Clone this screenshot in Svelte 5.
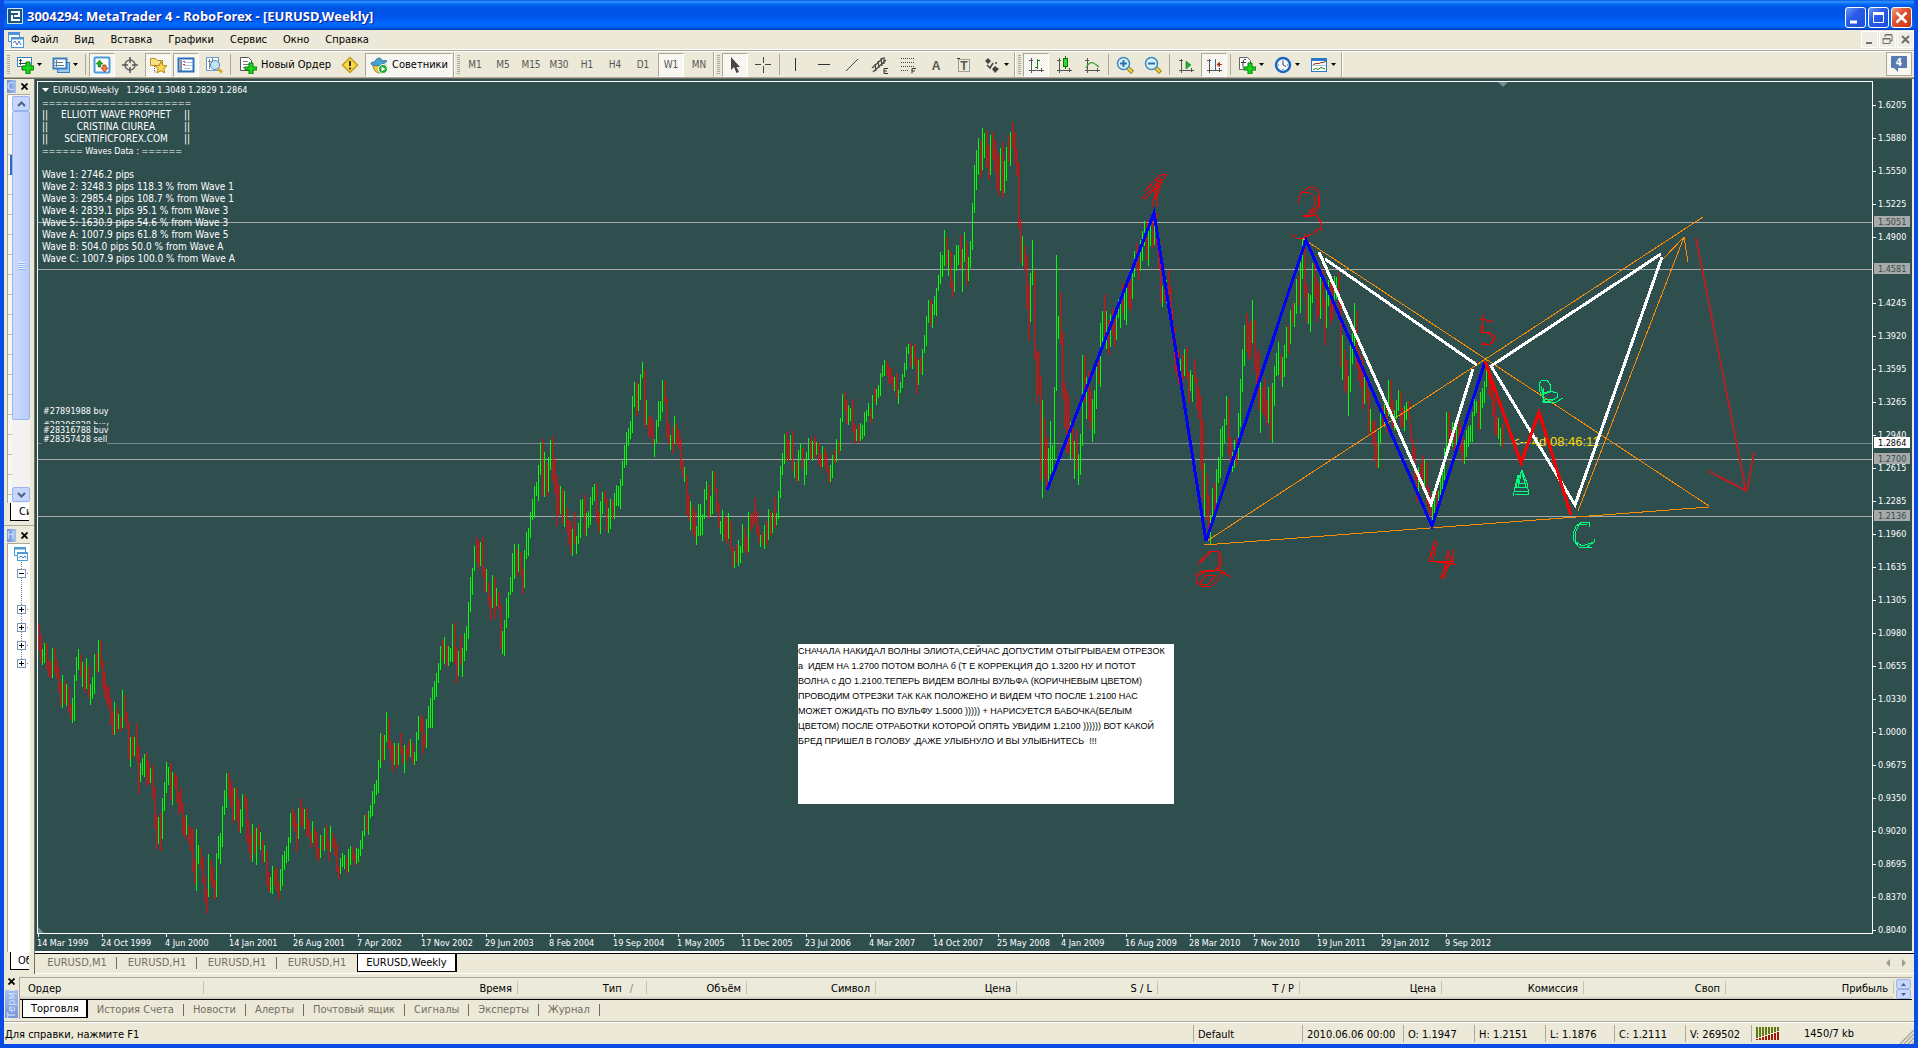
<script lang="ts">
	interface Segment {
		x: number;
		bars: string;
	}

	// Weekly bars, 2px apart. r = down, g = up, then high-low on the plot's y axis
	const segments: Segment[] = [
		{
			x: 38,
			bars: `r624-651 r635-662 g649-665 g643-663 r643-670 r660-677 r662-678 g648-678 r648-673 r660-679
			r667-693 r683-706 g675-708 r681-704 g684-706 r687-713 r704-719 g698-723 g675-721 g657-681
			g649-670 r655-677 g662-687 r663-693 g658-689 r667-698 g684-705 g677-699 g654-694 r653-673
			g640-672 r641-668 r661-690 r672-699 r685-705 r687-709 r698-725 r711-735 g702-735 r707-732
			g714-729 r717-732 g690-728 r695-722 r712-729 r722-760 g737-767 r736-758 g737-756 r723-761
			r746-794 g763-782 g758-775 g754-777 r753-786 r761-784 g768-783 r765-799 r787-829 r815-850
			g817-844 r813-851 g798-839 g782-811 g762-793 g767-785 r763-800 g772-805 r773-788 r776-803
			r792-815 r788-812 r803-835 r817-839 g815-835 r825-844 r828-851 r829-872 r860-883 g829-891
			g845-864 r847-869 r857-883 r876-903 r889-913 g854-897 r860-884 r867-888 r880-899 g853-897
			g836-859 g833-864 g806-847 g790-815 g773-808 r773-798 r780-806 r787-823 g788-820 r788-821
			r799-832 g809-833 g794-827 r795-809 r798-843 r820-852 r834-860 g824-862 r828-854 g828-865
			r825-846 g832-850 r840-862 g845-862 r851-886 r872-892 g877-893 g866-894 r869-886 r867-892
			r883-900 g869-891 g855-886 g851-870 g846-863 g837-861 g813-843 r809-827 r813-832 r823-852
			g808-839 r799-826 r808-827 g809-829 r808-836 r819-838 r833-848 g821-843 r828-846 r832-858
			r848-861 g835-858 r836-850 g828-851 r825-849 r842-861 g826-852 r833-848 r838-856 r844-872
			r866-879 g858-874 g853-867 g855-869 r857-873 g849-872 g846-865 r847-860 r854-865 g848-864
			g849-862 g840-856 g831-849 g815-836 r814-831 g811-835 g805-818 g791-816 g784-804 g780-795
			g760-793 g733-768 r735-762 g735-760 g712-742 r718-749 r740-761 r745-772 g743-765 r745-768
			g743-765 r733-754 r748-764 g745-773 r746-761 r741-756 g739-757 r743-764 g752-765 g732-761
			g716-740 r715-732 r718-754 r734-746 g719-748 g706-728 g698-728 g687-728 g681-700 g673-697
			g663-683 g646-670 r640-660 g637-664 r645-666 g646-666 g648-662 g624-662 r623-664 r647-683
			g651-676 r635-665 g648-677 g633-661 g626-651 g602-639 g577-612 g568-595 g546-571 r537-563
			r541-569 g542-566 r537-577 r568-592 g569-592 r582-606 r597-621 g575-608 r577-619 g588-606
			r592-610 r604-649 g631-654 g620-656 g598-628 g592-618 g577-595 g553-592 g544-579 r549-577
			g544-572 r552-575 r569-594 g550-588 g532-559 g528-556`
		},
		{
			x: 530,
			bars: `g512-538 g499-520 g486-518 g482-496 g465-501 g442-475 r439-496 g452-497 r462-496 g457-492
			g440-470 r436-482 r458-494 r475-526 r484-515 g486-514 r489-524 g491-527 r508-533 r520-545
			r522-554 g529-556 r512-544 g536-554 g523-544 g500-538 g499-516 r494-535 g513-536 g511-528
			g497-525 g487-505 g484-501 r483-523 r511-532 g501-534 g492-514 r491-503 r498-531 g508-533
			g499-529 r500-519 g493-519 g485-506 g486-506 g479-509 g461-486 g445-468 g432-465 g428-446
			g421-439 g396-433 g382-407 r382-416 g384-411 g374-400 g362-378 r370-428 g400-425 r416-438
			r417-436 r420-444 g439-457 g420-443 g401-427 g401-421 g380-412 r381-403 r397-438 r423-445
			g435-450 r427-454 g416-443 r423-445 r430-449 r438-470 r460-477 g467-482 r475-515 r494-521
			g501-530 r506-533 r511-538 g526-545 g504-536 g504-536 g514-535 g489-519 g481-500 r484-519
			g496-516 g471-514 r471-493 r488-512 r503-528 g521-534 g510-541 r516-540 r518-544 g513-539
			r521-551 r547-566 g551-568 r544-563 g540-566 g546-563 g524-553 r527-551 r537-554 g512-552
			r514-531 r513-527 r498-523 r511-535 r526-542 g535-547 r533-545 g525-549 r521-545 g509-540
			r511-536 g513-533 r497-528 g513-525 g491-519 g466-498 g453-475 g434-464 r432-461 r440-461
			g435-459 r431-471 g462-478 r462-483 g450-481 g443-459 r448-468 g460-485 g452-475 g438-459
			r438-460 g441-461 r436-458 g442-455 r442-465 r454-468 g446-467 r448-467 r453-473 r468-483
			g465-482 g455-478 r450-463 g439-462 r442-454 g418-451 g394-422 r392-411 r400-424 g405-425
			g408-421 r399-432 r424-444 g429-441 r425-443 g423-441 g425-439 g412-436 g410-422 g403-416
			r408-423 g395-419 r388-403 g389-405 g385-398 g373-396 g365-377 g360-376 r361-376 r366-384
			r368-383 r376-390 g377-391 r373-398 g390-404 g382-393 g374-388 g363-377 g347-370 g344-354
			r343-367 g346-369 r344-365 r358-394 g360-385 r357-373 g349-375 g335-353 g316-346 g300-323
			r300-326 g304-328 g296-315 g288-316 g275-291 g252-284 g255-277 g230-266 r237-266 g250-276
			r252-288 r282-298 g255-292 g245-271 g245-265 r235-269 g249-292 g232-262 r242-285 g257-281
			g241-268 g203-250 g165-213`
		},
		{
			x: 976,
			bars: `g150-190 g138-175 r140-178 g128-170 g133-158 r130-168 r145-180 g135-175 r132-160 r140-172
			r150-190 r155-195`
		},
		{
			x: 1000,
			bars: `g148-191 r142-198 g161-193 g147-181 r135-162 g132-166 r122-149 r132-165 r149-176 r163-228
			r219-262 g236-266 r246-271 r255-309 r285-341 g273-322 g240-285 r270-359 r350-404 r352-395
			r376-481 g400-498 r418-478 r437-490 g448-481 g421-474 g445-471 g387-460 g255-391 g316-339
			r292-345 r332-399 r382-428 r390-453 r396-454 g422-459 r425-458 g441-479 r430-470 g454-485
			g434-475 g355-446 r355-403 g377-419 r371-421 r390-429 g399-442 g390-434 g367-409 r360-384
			g323-387 g311-342 r294-336 g311-349 r320-355 g314-347 r308-336 r310-346 g315-340 g299-318
			g300-328 r283-314 g287-320 g285-325 r280-308 r280-311 g264-299 g251-277 r243-271 r257-280
			g240-271 g231-261 g221-246 r221-260 g230-266 g218-246 r220-248 g215-245 r213-246 r233-269
			r260-303 g286-307 r270-302 g280-303 r270-307 r286-327 r309-343 r326-371 r347-377 r350-385
			g359-383 r355-380 g349-376 r347-379 r372-403 g370-391 g375-402 r359-382 r377-410 r387-419
			r396-470 r420-500 g463-517 r474-520 r495-537 g515-544 g488-520 r483-513 g469-503 g457-483
			g429-478 g426-457 g419-443 g396-425 r398-455 r437-467 g452-472 g440-468 r438-466 g413-459
			g379-427 g349-392 g325-366 r313-352 r323-360 r320-356 g300-343 r320-372 r353-385 r350-410
			g377-433 r387-414 r379-417 r400-425 g387-423 r386-440 g383-443 g366-406 g353-376 g342-375
			r354-380 g357-387 g345-377 g327-358 r325-354 g310-344 r303-324 g303-327 g279-314 r276-306
			g262-313 g238-279 r233-298 r284-322 g293-324 g295-332 g263-303 r260-297 r278-322 r284-316
			g275-319 r270-308 r300-346 g289-328 g280-306 r282-324 r286-319 g276-300 g277-299 r273-308
			r300-367 g335-380 r349-391 r360-394 g376-416 g344-392 g333-364 g303-347 r311-369 r350-381
			r355-388 r360-409 g375-404 r379-402 r391-437 g409-432 r421-445 r421-461 r442-468 g431-468
			g412-443 r406-427 g404-427 r404-433 g380-416 r380-410 r400-428 g410-430 g400-419 g390-411
			r391-427 r408-427 g406-431 g402-420 r401-422 r423-442 r439-462 r447-480 r470-502 g467-491
			r463-487 r455-480 g460-490 r462-505 r487-513 r495-517 g491-522 g490-515 r490-510 g491-505
			g473-497 g467-493 g448-480 g412-453 r412-443 r430-447 g422-447 r425-450 g422-452 r421-447
			r427-453 r438-462 g440-464 g430-457 g426-447 g425-442 g412-442 g398-416 g401-413 r400-430
			g392-429 g388-408 g381-403 g357-387 r373-395 r380-399 r384-416 r397-434 r416-436 g418-439
			g428-446 r424-447`
		}
	];

	function barPath(kind: 'r' | 'g') {
		let d = '';
		for (const seg of segments) {
			seg.bars.split(/\s+/).forEach((bar, i) => {
				if (bar[0] !== kind) return;
				const [high, low] = bar.slice(1).split('-');
				d += `M${seg.x + i * 2 + 0.5} ${high}V${low}`;
			});
		}
		return d;
	}

	const upBars = barPath('g');
	const downBars = barPath('r');

	const prices = [
		'1.6205', '1.5880', '1.5550', '1.5225', '1.4900', '', '1.4245', '1.3920', '1.3595',
		'1.3265', '1.2940', '1.2615', '1.2285', '1.1960', '1.1635', '1.1305', '1.0980', '1.0655',
		'1.0330', '1.0000', '0.9675', '0.9350', '0.9020', '0.8695', '0.8370', '0.8040'
	];

	const dates = [
		'14 Mar 1999', '24 Oct 1999', '4 Jun 2000', '14 Jan 2001', '26 Aug 2001', '7 Apr 2002',
		'17 Nov 2002', '29 Jun 2003', '8 Feb 2004', '19 Sep 2004', '1 May 2005', '11 Dec 2005',
		'23 Jul 2006', '4 Mar 2007', '14 Oct 2007', '25 May 2008', '4 Jan 2009', '16 Aug 2009',
		'28 Mar 2010', '7 Nov 2010', '19 Jun 2011', '29 Jan 2012', '9 Sep 2012'
	];

	const levels = [
		{ y: 222, price: '1.5051', kind: 'level' },
		{ y: 269, price: '1.4581', kind: 'level' },
		{ y: 443, price: '1.2864', kind: 'bid' },
		{ y: 459, price: '1.2700', kind: 'level' },
		{ y: 516, price: '1.2136', kind: 'level' }
	];

	const orders = [
		{ y: 414, text: '#27891988 buy' },
		{ y: 428, text: '#28306828 buy' },
		{ y: 433, text: '#28316788 buy' },
		{ y: 442, text: '#28357428 sell' }
	];

	const waves = [
		'Wave 1: 2746.2 pips',
		'Wave 2: 3248.3 pips 118.3 % from Wave 1',
		'Wave 3: 2985.4 pips 108.7 % from Wave 1',
		'Wave 4: 2839.1 pips 95.1 % from Wave 3',
		'Wave 5: 1630.9 pips 54.6 % from Wave 3',
		'Wave A: 1007.9 pips 61.8 % from Wave 5',
		'Wave B: 504.0 pips 50.0 % from Wave A',
		'Wave C: 1007.9 pips 100.0 % from Wave A'
	];

	const note = [
		'СНАЧАЛА НАКИДАЛ ВОЛНЫ ЭЛИОТА,СЕЙЧАС ДОПУСТИМ ОТЫГРЫВАЕМ ОТРЕЗОК',
		'а  ИДЕМ НА 1.2700 ПОТОМ ВОЛНА б (Т Е КОРРЕКЦИЯ ДО 1.3200 НУ И ПОТОТ',
		'ВОЛНА с ДО 1.2100.ТЕПЕРЬ ВИДЕМ ВОЛНЫ ВУЛЬФА (КОРИЧНЕВЫМ ЦВЕТОМ)',
		'ПРОВОДИМ ОТРЕЗКИ ТАК КАК ПОЛОЖЕНО И ВИДЕМ ЧТО ПОСЛЕ 1.2100 НАС',
		'МОЖЕТ ОЖИДАТЬ ПО ВУЛЬФУ 1.5000 ))))) + НАРИСУЕТСЯ БАБОЧКА(БЕЛЫМ',
		'ЦВЕТОМ) ПОСЛЕ ОТРАБОТКИ КОТОРОЙ ОПЯТЬ УВИДИМ 1.2100 )))))) ВОТ КАКОЙ',
		'БРЕД ПРИШЕЛ В ГОЛОВУ ,ДАЖЕ УЛЫБНУЛО И ВЫ УЛЫБНИТЕСЬ  !!!'
	].join('\n');

	const menu = ['Файл', 'Вид', 'Вставка', 'Графики', 'Сервис', 'Окно', 'Справка'];
	const periods = ['M1', 'M5', 'M15', 'M30', 'H1', 'H4', 'D1', 'W1', 'MN'];
	const chartTabs = ['EURUSD,M1', 'EURUSD,H1', 'EURUSD,H1', 'EURUSD,H1', 'EURUSD,Weekly'];
	const terminalTabs = [
		'Торговля', 'История Счета', 'Новости', 'Алерты', 'Почтовый ящик', 'Сигналы', 'Эксперты', 'Журнал'
	];

	const columns = [
		{ label: 'Ордер', width: 184 },
		{ label: 'Время', width: 314 },
		{ label: 'Тип', width: 129, sorted: true },
		{ label: 'Объём', width: 100 },
		{ label: 'Символ', width: 129 },
		{ label: 'Цена', width: 141 },
		{ label: 'S / L', width: 141 },
		{ label: 'T / P', width: 142 },
		{ label: 'Цена', width: 142 },
		{ label: 'Комиссия', width: 142 },
		{ label: 'Своп', width: 142 },
		{ label: 'Прибыль', width: 0 }
	];

	const status = [
		{ text: 'Default', width: 109 },
		{ text: '2010.06.06 00:00', width: 101 },
		{ text: 'O: 1.1947', width: 71 },
		{ text: 'H: 1.2151', width: 71 },
		{ text: 'L: 1.1876', width: 69 },
		{ text: 'C: 1.2111', width: 71 },
		{ text: 'V: 269502', width: 66 }
	];
</script>

{#snippet icon(name: string)}
	<svg class="icon" width="18" height="18" viewBox="0 0 18 18" aria-hidden="true">
		{#if name === 'new-chart'}
			<rect x="1.5" y="1.5" width="14" height="9" fill="#fff" stroke="#3a80c0" />
			<path d="M4.5 3v6M3 7.500h9M3 4.500h3" stroke="#345" fill="none" />
			<path d="M10 6h4v4h4v4h-4v4h-4v-4h-4v-4h4z" fill="#18d818" stroke="#087808" />
		{:else if name === 'profiles'}
			<rect x="5.500" y="6.500" width="12" height="10" fill="#9ccbf0" stroke="#3a80c0" />
			<rect x="1.500" y="2.500" width="13" height="10" fill="#fff" stroke="#3a80c0" stroke-width="2" />
			<path d="M4.500 4v7M3 9.500h9M3 6.500h8" stroke="#678" fill="none" />
		{:else if name === 'market-watch'}
			<rect x="1.500" y="1.500" width="15" height="15" rx="1" fill="#fff" stroke="#4a9be0" stroke-width="2" />
			<path d="M3 8l3.500-4L10 8H8v3H5V8z" fill="#20b020" stroke="#086808" stroke-width=".5" />
			<path d="M8 12h2V9h3v3h2l-3.500 4z" fill="#f08040" stroke="#a02010" stroke-width=".7" />
		{:else if name === 'data-window'}
			<circle cx="9" cy="9" r="5" fill="none" stroke="#666" stroke-width="1.500" />
			<path d="M9 1v6M9 11v6M1 9h6M11 9h6" stroke="#555" stroke-width="1.500" />
		{:else if name === 'navigator'}
			<path d="M1.500 2.500h5l2 2h5v5h-12z" fill="#fbe08a" stroke="#b88c28" />
			<path d="M5.500 10v6h3" stroke="#555" stroke-dasharray="1 1" fill="none" />
			<path d="M12 5.500l1.800 4 4 .4-3 2.800.9 4.200-3.700-2.200-3.700 2.200.9-4.200-3-2.800 4-.4z" fill="#ffd84a" stroke="#b08818" />
		{:else if name === 'terminal'}
			<rect x="1.500" y="2.500" width="15" height="13" fill="#fff" stroke="#2a70c0" stroke-width="2" />
			<path d="M4 4v11" stroke="#123" />
			<path d="M7 6.500h8M7 9.500h8M7 12.500h6" stroke="#a8c4e0" />
			<path d="M6 5.500h2M6 8.500h2" stroke="#e02020" />
		{:else if name === 'tester'}
			<rect x="1.500" y="1.500" width="12" height="13" fill="#fff" stroke="#6a9cc8" />
			<path d="M4.500 3v10M7.500 2v9M3 5.500h9" stroke="#789" fill="none" />
			<circle cx="10" cy="9" r="4.500" fill="#c4e2f6" stroke="#5a8ab0" />
			<path d="M13 12.500l4 4" stroke="#d8a820" stroke-width="2.500" />
		{:else if name === 'new-order'}
			<path d="M1.500 1.500h8l3 3v10h-11z" fill="#fff" stroke="#555" />
			<path d="M4 5.500h5M4 8.500h6M4 11.500h4" stroke="#777" />
			<path d="M10 7h4v4h4v3h-4v4h-4v-4H6v-3h4z" fill="#18d818" stroke="#087808" />
		{:else if name === 'alert'}
			<path d="M9 1.500L16.500 9 9 16.500 1.500 9z" fill="#f8d848" stroke="#c89c18" stroke-width="1.500" />
			<path d="M9 5v5M9 11.500v2" stroke="#222" stroke-width="1.800" />
		{:else if name === 'experts'}
			<path d="M3 9c0 5 3 8 7 8s6-4 6-8z" fill="#e8c848" stroke="#a88820" />
			<path d="M1 8c4 3 11 2 16-3-2-1-4 0-5 0C12 1 6 1 5 6 3 6 1 6 1 8z" fill="#4aa0d0" stroke="#2a78a8" />
			<circle cx="13" cy="13" r="4.500" fill="#20a830" stroke="#fff" />
			<path d="M11.500 10.500v5l4-2.500z" fill="#fff" />
		{:else if name === 'cursor'}
			<path d="M5 1v13l3-3 2.500 6 2.500-1-2.500-5H14z" fill="#444" />
		{:else if name === 'crosshair'}
			<path d="M9 1v6M9 10v7M1 8.500h6M11 8.500h6" stroke="#444" shape-rendering="crispEdges" />
		{:else if name === 'vline'}
			<path d="M8.500 2v13" stroke="#333" shape-rendering="crispEdges" />
		{:else if name === 'hline'}
			<path d="M3 8.500h12" stroke="#333" shape-rendering="crispEdges" />
		{:else if name === 'trend'}
			<path d="M3 15L15 3" stroke="#444" />
		{:else if name === 'channel'}
			<path d="M1 12L12 2M2 16L15 4M4 8l1 7M7 5l1 7M10 2l1 8M13 1v7" stroke="#444" stroke-width="1.200" />
			<path d="M17 12.500h-4v5h4M13 15h3" stroke="#333" fill="none" />
		{:else if name === 'fibo'}
			<path d="M2 2.500h14M2 6.500h14M2 10.500h14M2 14.500h8" stroke="#444" stroke-dasharray="1 1" />
			<path d="M17 12.500h-4v5M13 15h3" stroke="#333" fill="none" />
		{:else if name === 'text'}
			<text x="9" y="14" text-anchor="middle" class="glyph">A</text>
		{:else if name === 'label'}
			<rect x="3.500" y="3.500" width="11" height="12" fill="none" stroke="#555" stroke-dasharray="1 1" />
			<path d="M2 2.500h3" stroke="#333" />
			<text x="9" y="14" text-anchor="middle" class="glyph">T</text>
		{:else if name === 'arrows'}
			<path d="M5 2l3 3-3 3-3-3zM12 10l4 3-4 4-3-4z" fill="#444" />
			<path d="M4 9l3 3 3-5M13 8v-2" stroke="#444" stroke-width="1.500" fill="none" />
		{:else if name === 'bars' || name === 'candles' || name === 'line'}
			<path d="M4.500 2v15M2 14.500h15M2 4.500h4M14.500 12v4" stroke="#555" fill="none" shape-rendering="crispEdges" />
			{#if name === 'bars'}
				<path d="M10.500 3v10M10 4.500h3M8 11.500h2" stroke="#188018" fill="none" shape-rendering="crispEdges" />
			{:else if name === 'candles'}
				<path d="M10.500 0v13" stroke="#087808" />
				<rect x="8.500" y="2.500" width="4" height="8" fill="#30d830" stroke="#087808" />
			{:else}
				<path d="M3 12c4-8 7-6 13-1" stroke="#38a038" stroke-width="1.300" fill="none" />
			{/if}
		{:else if name === 'zoom-in' || name === 'zoom-out'}
			<path d="M11.500 11.500l5 5" stroke="#8a6a10" stroke-width="4" />
			<path d="M11.500 11.500l4.500 4.500" stroke="#f0cc40" stroke-width="2.500" />
			<circle cx="7.500" cy="7.500" r="6" fill="#d8f0fc" stroke="#3a88c0" stroke-width="1.500" />
			<path d={name === 'zoom-in' ? 'M4 7.500h7M7.500 4v7' : 'M4 7.500h7'} stroke="#2a70a8" stroke-width="2" />
		{:else if name === 'autoscroll' || name === 'shift'}
			<path d="M4.500 3v14M2 14.500h15M2 4.500h4M14.500 12v4" stroke="#555" fill="none" shape-rendering="crispEdges" />
			{#if name === 'autoscroll'}
				<path d="M9 5l5 4-5 4z" fill="#20b030" stroke="#087818" stroke-width=".6" />
			{:else}
				<path d="M10.500 3v11" stroke="#2a70a8" shape-rendering="crispEdges" />
				<path d="M12 8.500h5M14.500 6.500l-2.500 2 2.500 2z" stroke="#b03010" fill="#b03010" />
			{/if}
		{:else if name === 'indicators'}
			<path d="M1.500 1.500h8l3 3v9h-11z" fill="#fff" stroke="#666" />
			<path d="M8 3.500c-3-1-3 2-3 8M3 6.500h5" stroke="#333" fill="none" />
			<path d="M10 7h4v4h4v3h-4v4h-4v-4H6v-3h4z" fill="#18d818" stroke="#087808" />
		{:else if name === 'clock'}
			<circle cx="9" cy="9" r="7" fill="#f4faff" stroke="#1c68c0" stroke-width="2.500" />
			<path d="M9 4.500V9l3 1.500M13 9h1M4 9h1M9 13v1" stroke="#444" fill="none" />
		{:else if name === 'template'}
			<rect x="1.500" y="2.500" width="15" height="13" fill="#fff" stroke="#2a78c8" />
			<path d="M1 3.500h16" stroke="#2a78c8" stroke-width="3" />
			<path d="M3 8.500l3-1h3l2-1h2l3-1" stroke="#a03020" fill="none" />
			<path d="M2 9.500h14" stroke="#8ab" stroke-width=".6" />
			<path d="M3 13.500l3-1 2 1 3-2 4 1.500" stroke="#208030" fill="none" />
		{:else if name === 'charts'}
			<rect x="1.500" y="1.500" width="11" height="9" fill="#fff" stroke="#4c94d8" />
			<path d="M1 3h12" stroke="#4c94d8" stroke-width="2" />
			<rect x="4.500" y="6.500" width="12" height="10" fill="#fff" stroke="#4c94d8" />
			<path d="M4 7.500h13" stroke="#4c94d8" stroke-width="2" />
			<path d="M6 12l2-2 2 4 2-4 2 4" stroke="#4c74b8" fill="none" />
		{/if}
	</svg>
{/snippet}

{#snippet tool(name: string, title: string, checked = false)}
	<button class="tool" class:checked {title}>{@render icon(name)}</button>
{/snippet}

{#snippet drop(name: string, title: string)}
	<button class="tool drop" {title}>
		{@render icon(name)}
		<svg width="5" height="3" viewBox="0 0 5 3" aria-hidden="true"><path d="M0 0h5L2.500 3z" /></svg>
	</button>
{/snippet}

{#snippet closeMark()}
	<button class="dock-close" aria-label="Закрыть">
		<svg width="7" height="7" viewBox="0 0 7 7"><path d="M.5.5l6 6M6.500.5l-6 6" stroke="#000" stroke-width="1.800" /></svg>
	</button>
{/snippet}

<div class="window">
	<header class="title-bar">
		<svg width="16" height="16" viewBox="0 0 16 16" aria-hidden="true">
			<rect width="16" height="16" rx="1" fill="#cfe6f2" />
			<rect x="1" y="1" width="14" height="14" fill="#1d5878" />
			<path d="M4 4h8v4H7M5 7v5h8" stroke="#fff" stroke-width="2" fill="none" />
		</svg>
		<h1>3004294: MetaTrader 4 - RoboForex - [EURUSD,Weekly]</h1>
		<div class="caption-buttons">
			<button aria-label="Свернуть">
				<svg width="19" height="19" viewBox="0 0 19 19"><path d="M4 14h7" stroke="#fff" stroke-width="3" /></svg>
			</button>
			<button aria-label="Развернуть">
				<svg width="19" height="19" viewBox="0 0 19 19"><path d="M4.500 5v9.500h10V5" stroke="#fff" fill="none" /><path d="M4 5.500h11" stroke="#fff" stroke-width="3" /></svg>
			</button>
			<button class="close" aria-label="Закрыть">
				<svg width="19" height="19" viewBox="0 0 19 19"><path d="M4.500 4.500l10 10M14.500 4.500l-10 10" stroke="#fff" stroke-width="2.500" /></svg>
			</button>
		</div>
	</header>

	<nav class="menu-bar">
		{@render icon('charts')}
		<ul>
			{#each menu as item}
				<li><button>{item}</button></li>
			{/each}
		</ul>
		<div class="mdi-buttons">
			<button aria-label="Свернуть окно"><svg width="15" height="15" viewBox="0 0 15 15"><path d="M4 11h6" stroke="#716f64" stroke-width="2" /></svg></button>
			<button aria-label="Восстановить окно"><svg width="15" height="15" viewBox="0 0 15 15"><path d="M5 5V3h7v6h-2M5 2.500h7M3 6.500h7v5H3zM3 7h7" stroke="#716f64" fill="none" /></svg></button>
			<button aria-label="Закрыть окно"><svg width="15" height="15" viewBox="0 0 15 15"><path d="M4 4l7 7M11 4l-7 7" stroke="#716f64" stroke-width="2" /></svg></button>
		</div>
	</nav>

	<div class="toolbar">
		<div class="group">
			<i class="grip"></i>
			{@render drop('new-chart', 'Новый график')}
			{@render drop('profiles', 'Профили')}
			<i class="sep"></i>
			{@render tool('market-watch', 'Обзор рынка', true)}
			{@render tool('data-window', 'Окно данных')}
			{@render tool('navigator', 'Навигатор', true)}
			{@render tool('terminal', 'Терминал', true)}
			{@render tool('tester', 'Тестер стратегий')}
			<i class="sep"></i>
			<button class="tool wide">{@render icon('new-order')}Новый Ордер</button>
			{@render tool('alert', 'MetaEditor')}
			<button class="tool wide checked">{@render icon('experts')}Советники</button>
		</div>
		<div class="group">
			<i class="grip"></i>
			{#each periods as period}
				<button class="tool period" class:checked={period === 'W1'}>{period}</button>
			{/each}
		</div>
		<div class="group">
			<i class="grip"></i>
			{@render tool('cursor', 'Курсор', true)}
			{@render tool('crosshair', 'Перекрестие')}
			<i class="sep"></i>
			{@render tool('vline', 'Вертикальная линия')}
			{@render tool('hline', 'Горизонтальная линия')}
			{@render tool('trend', 'Трендовая линия')}
			{@render tool('channel', 'Равноудаленный канал')}
			{@render tool('fibo', 'Линии Фибоначчи')}
			{@render tool('text', 'Текст')}
			{@render tool('label', 'Текстовая метка')}
			{@render drop('arrows', 'Стрелки')}
		</div>
		<div class="group">
			<i class="grip"></i>
			{@render tool('bars', 'Бары', true)}
			{@render tool('candles', 'Свечи')}
			{@render tool('line', 'Линия')}
			<i class="sep"></i>
			{@render tool('zoom-in', 'Увеличить')}
			{@render tool('zoom-out', 'Уменьшить')}
			<i class="sep"></i>
			{@render tool('autoscroll', 'Автопрокрутка')}
			{@render tool('shift', 'Сдвиг графика', true)}
			<i class="sep"></i>
			{@render drop('indicators', 'Индикаторы')}
			{@render drop('clock', 'Периоды')}
			{@render drop('template', 'Шаблоны')}
		</div>
		<button class="messages" aria-label="4 сообщения">
			<svg width="18" height="16" viewBox="0 0 18 16" aria-hidden="true">
				<path d="M2 0h14q1 0 1 1v10q0 1-1 1H8v4l-4-4H2q-1 0-1-1V1q0-1 1-1z" fill="#5878b0" />
				<text x="9" y="10" text-anchor="middle">4</text>
			</svg>
		</button>
	</div>

	<div class="workspace">
		<aside class="docks">
			<section class="dock market">
				<header><span class="dock-title">С</span>{@render closeMark()}</header>
				<div class="dock-body">
					<div class="rows"></div>
					<div class="scroll">
						<button class="arrow" aria-label="Вверх"><svg width="9" height="6" viewBox="0 0 9 6"><path d="M1 5l3.500-3.500L8 5" /></svg></button>
						<div class="thumb"><i></i></div>
						<button class="arrow" aria-label="Вниз"><svg width="9" height="6" viewBox="0 0 9 6"><path d="M1 1l3.500 3.500L8 1" /></svg></button>
					</div>
				</div>
				<div class="dock-tab">Си</div>
			</section>
			<section class="dock tree">
				<header><span class="dock-title">Н</span>{@render closeMark()}</header>
				<div class="dock-body">
					<svg width="20" height="130" viewBox="0 0 20 130" aria-hidden="true">
						<path d="M13.500 18v104" stroke="#888" stroke-dasharray="1 1" />
						{#each [30, 66, 84, 102, 120] as y, i}
							<rect x="9.500" y={y - 4.5} width="8" height="8" fill="#fff" stroke="#7898b5" />
							<path d={i ? `M11 ${y - 0.5}h5M13.500 ${y - 3}v5` : `M11 ${y - 0.5}h5`} stroke="#000" />
							<path d={`M19 ${y - 0.5}h1`} stroke="#888" />
						{/each}
						<rect x="6.500" y="3.500" width="11" height="8" fill="#fff" stroke="#4c9cd8" />
						<path d="M6 4.500h12" stroke="#4c9cd8" stroke-width="2" />
						<rect x="9.500" y="8.500" width="10" height="8" fill="#fff" stroke="#4c9cd8" />
						<path d="M9 9h11" stroke="#4c9cd8" stroke-width="2" />
						<path d="M11 14l2-2 2 2 2-2 1 2" stroke="#4c74b8" fill="none" />
					</svg>
				</div>
				<div class="dock-tab">Об</div>
			</section>
		</aside>

		<main>
			<div class="chart">
				<svg width="100%" height="100%" role="img" aria-label="EURUSD,Weekly">
					<g transform="translate(-35 -79)">
						<g shape-rendering="crispEdges" fill="none">
							{#each levels as level}
								<path class={level.kind} d={`M38 ${level.y + 0.5}H1872`} />
							{/each}
							<path d={upBars} stroke="#00ff00" />
							<path d={downBars} stroke="#ff0000" />
						</g>
						<path d="M38 927v6h6z M1498 82h10l-5 5z" fill="#778899" />

						{#each orders as order}
							<rect x="42" y={order.y - 9} width="65" height="12" fill="#2f4f4f" />
							<text x="43" y={order.y}>{order.text}</text>
						{/each}
						<text class="countdown" x="1512" y="446">&lt;-- 4d 08:46:11</text>

						<g fill="none" shape-rendering="crispEdges">
							<path class="wolfe" d="M1204 545L1709 507M1207 541L1703 217M1302 238L1709 506M1578 511L1684 237M1663 259L1684 237L1688 262" />
							<path class="elliott" d="M1047 490L1154 213L1206 541L1306 240L1432 526L1485 362" />
							<path class="butterfly" d="M1319 252L1431 504L1473 369M1325 259L1477 365M1661 254L1491 366L1575 505L1662 257" />
							<path class="abc" d="M1485 361L1521 463L1539 412L1571 515" />
							<path class="fall" d="M1696 238L1746 491M1708 471L1747 491L1754 452" />
						</g>

						<!-- Freehand wave marks -->
						<g fill="none" shape-rendering="crispEdges" stroke="#ff0000">
							<path d="M1143 199l1-3 6-6 12-12M1143 196l2 3 20-21 2-4h-4l-8 6-11 12M1153 207v-4l5-24 2-4M1157 207v-10l5-18M1155 200l5-20" />
							<path d="M1197 565l10-11 4-3h7l2 3v12l-6 5h-12l-6 4v7l5 4h11l6-6 3-8 10 5M1200 563l12-12M1219 552v17l8 7M1199 576l7-6h14l6 4M1203 579l-4 5h9l8-9-10 0-5 7" />
							<path d="M1298 204v-5l3-6 7-5 6-1 4 5 2 8-1 7-8 9-8 0 12-1 5 5v8l-6 5-11 5h-7l-5-4M1303 192l7 1 5 5v8l-8 9M1318 191v15l-8 8M1316 214l4 8v9" />
							<path d="M1435 539l-3 15-4 7 26 3 2 1M1437 542l-4 19 20 1M1434 543l-4 14M1450 550l-4 12-5 17M1453 549v13l-7 6-3 11M1446 556l6 2-9 20M1448 551l-4 28" />
							<path d="M1482 315v17h7l5 4v5l-5 4-7-2M1480 319l6 1 7 2M1483 320l-2 12 6 1 4 1 2 7-3 3h-8" />
						</g>
						<g fill="none" shape-rendering="crispEdges" stroke="#00ff7f">
							<path d="M1513 496l5-21-2 12M1518 475v13M1516 485l6-15 5 13 2 12M1522 470l4 18M1516 487h11M1515 491h13M1515 494h13M1521 474l-2 10 6-1-3-9" />
							<path d="M1545 401l-5-9-1-8 3-4h5l4 6-1 6-6 2-3-6M1543 401l1-8 6-2 7 2 1 4-7 4-9 1M1543 388v14h13l7-4M1541 386l3 14 9-1" />
							<path d="M1589 527l1-4-8-1-6 4-3 8 1 7 5 6h8l7-5v-3M1587 524l-8 1-4 8 1 9 6 4 12-4M1580 547l12 1" />
						</g>

						<!-- Frame and scales -->
						<path class="frame" d="M1872.500 81V933.500H37.500V81.500H1873" shape-rendering="crispEdges" />
						{#each prices as price, i}
							{#if price}
								<path class="tick" d={`M1873 ${105.5 + i * 33}h3`} />
								<text x="1878" y={108 + i * 33}>{price}</text>
							{/if}
						{/each}
						{#each dates as date, i}
							<path class="tick" d={`M${38.5 + i * 64} 934v3`} />
							<text x={37 + i * 64} y="946">{date}</text>
						{/each}
						{#each levels as level}
							<rect x="1874" y={level.y - 6} width="36" height="11" fill={level.kind === 'bid' ? '#fff' : '#a9a9a9'} />
							<text class="{level.kind}-tag" x="1878" y={level.y + 3}>{level.price}</text>
						{/each}
					</g>
				</svg>

				<p class="symbol">
					<svg width="7" height="4" viewBox="0 0 7 4" aria-hidden="true"><path d="M0 0h7L3.500 4z" fill="#fff" /></svg>
					<span>EURUSD,Weekly&nbsp;&nbsp; 1.2964 1.3048 1.2829 1.2864</span>
				</p>
				<div class="comment">
					<div class="banner">
						<p class="rule">======================</p>
						{#each ['ELLIOTT WAVE PROPHET', 'CRISTINA CIUREA', 'SCIENTIFICFOREX.COM'] as line}
							<p><span>||</span><span>{line}</span><span>||</span></p>
						{/each}
						<p class="rule">====== Waves Data : ======</p>
					</div>
					{#each waves as wave}
						<p>{wave}</p>
					{/each}
				</div>
				<p class="note">{note}</p>
			</div>

			<div class="chart-tabs">
				{#each chartTabs as tab, i}
					<button class:active={i === 4}>{tab}</button>
				{/each}
				<span class="tab-arrows">
					<svg width="20" height="8" viewBox="0 0 20 8" aria-hidden="true"><path d="M4 0v8L0 4zM16 0v8l4-4z" fill="#9c9a8c" /></svg>
				</span>
			</div>
		</main>
	</div>

	<section class="terminal">
		<div class="terminal-side">
			{@render closeMark()}
			<span>Терминал</span>
		</div>
		<div class="terminal-body">
			<div class="table-row">
				<table>
					<colgroup>
						{#each columns as col}
							<col style:width={col.width ? `${col.width}px` : 'auto'} />
						{/each}
					</colgroup>
					<thead>
						<tr>
							{#each columns as col}
								<th>{col.label}{#if col.sorted}<i>∕</i>{/if}</th>
							{/each}
						</tr>
					</thead>
				</table>
				<div class="spin">
					<button aria-label="Вверх"><svg width="5" height="3" viewBox="0 0 5 3"><path d="M0 3h5L2.500 0z" /></svg></button>
					<button aria-label="Вниз"><svg width="5" height="3" viewBox="0 0 5 3"><path d="M0 0h5L2.500 3z" /></svg></button>
				</div>
			</div>
			<div class="terminal-tabs">
				{#each terminalTabs as tab, i}
					<button class:active={i === 0}>{tab}</button>
				{/each}
			</div>
		</div>
	</section>

	<footer class="status-bar">
		<span class="hint">Для справки, нажмите F1</span>
		{#each status as cell}
			<span class="cell" style:width="{cell.width}px">{cell.text}</span>
		{/each}
		<span class="cell traffic">
			<svg width="24" height="13" viewBox="0 0 24 13" aria-hidden="true">
				{#each Array(8) as _, i}
					<rect x={i * 3} y="0" width="2" height={11 - i} fill="#5c7a10" />
					<rect x={i * 3} y={12 - i} width="2" height={1 + i} fill="#a01808" />
				{/each}
			</svg>
			1450/7 kb
		</span>
		<svg class="grip-corner" width="14" height="14" viewBox="0 0 14 14" aria-hidden="true">
			<path d="M0 14L14 0M4 14L14 4M8 14l6-6M12 14l2-2" stroke="#aca899" stroke-width="1.500" />
		</svg>
	</footer>
</div>

<style>
	:global(body) {
		margin: 0;
		background: #ece9d8;
	}

	.window {
		display: flex;
		flex-direction: column;
		min-height: 100vh;
		box-sizing: border-box;
		border: solid #0a4ce4;
		border-width: 0 4px 4px;
		background: #ece9d8;
		color: #000;
		font: 11px/14px 'DejaVu Sans Condensed', 'Noto Sans', sans-serif;
		overflow: hidden;
	}

	button {
		margin: 0;
		padding: 0;
		border: 0;
		background: none;
		color: inherit;
		font: inherit;
	}

	p, h1, ul { margin: 0; padding: 0; }

	/* ── Title bar ── */
	.title-bar {
		display: flex;
		align-items: center;
		height: 30px;
		margin: 0 -4px;
		padding: 2px 6px 0 7px;
		box-sizing: border-box;
		background: linear-gradient(#0058e6, #3a93ff 6%, #127dff 10%, #0262ee 16%, #0054e3 28%, #0055eb 56%, #0068ff 78%, #0068ff 88%, #0046c8 97%, #0038b8);
	}

	h1 {
		flex: 1;
		margin-left: 4px;
		color: #fff;
		font: bold 13px/20px 'Noto Sans', sans-serif;
		text-shadow: 1px 1px 0 #0a1883;
	}

	.caption-buttons { display: flex; gap: 2px; padding-top: 2px; }

	.caption-buttons button {
		width: 21px;
		height: 21px;
		border: 1px solid #fff;
		border-radius: 3px;
		background: linear-gradient(135deg, #6f97f0, #2a5ce8 40%, #1c4ed8);
	}

	.caption-buttons .close { background: linear-gradient(135deg, #f0a080, #e05030 40%, #c83810); }
	.caption-buttons svg { display: block; }

	/* ── Menu ── */
	.menu-bar {
		display: flex;
		align-items: center;
		height: 19px;
		padding-left: 3px;
		border-bottom: 1px solid #fff;
		box-shadow: 0 1px #aca899, 0 2px #fff;
	}

	.menu-bar ul {
		display: flex;
		flex: 1;
		gap: 16px;
		padding: 1px 0 0 6px;
		list-style: none;
	}

	.mdi-buttons { display: flex; gap: 1px; }

	.mdi-buttons button {
		width: 17px;
		height: 17px;
		border: 1px solid #fff;
		background: #efeee6;
	}

	.mdi-buttons svg { display: block; }

	/* ── Toolbar ── */
	.toolbar {
		display: flex;
		height: 25px;
		margin-top: 2px;
		border-bottom: 1px solid #aca899;
		box-shadow: 0 1px #716f64;
	}

	.group {
		display: flex;
		align-items: center;
		gap: 2px;
		padding: 0 1px 0 3px;
		border-right: 1px solid #aca899;
		box-shadow: 1px 0 #fff;
	}

	.grip {
		width: 3px;
		height: 19px;
		background: repeating-linear-gradient(#aca899 0 1px, transparent 1px 2px);
	}

	.sep {
		width: 1px;
		height: 21px;
		margin: 0 1px;
		background: #aca899;
	}

	.tool {
		display: flex;
		align-items: center;
		justify-content: center;
		width: 26px;
		height: 24px;
		box-sizing: border-box;
		border: 1px solid transparent;
	}

	.tool.drop { width: 34px; justify-content: flex-start; gap: 3px; padding-left: 3px; }
	.tool.wide { width: auto; gap: 4px; padding: 0 3px 0 4px; }
	.period { color: #555; font-size: 10px; }

	.tool.checked {
		border-color: #aca899 #fff #fff #aca899;
		background: repeating-conic-gradient(#fff 0 25%, #f0eee2 0 50%) 0 0 / 2px 2px;
	}

	.icon { flex: none; }
	.glyph { fill: #555; font: bold 12px 'Liberation Sans', sans-serif; }

	.messages {
		width: 26px;
		height: 24px;
		margin: 0 2px 0 auto;
		border: 1px solid #aca899;
		background: #f8f7f2;
		box-sizing: border-box;
	}

	.messages svg { display: block; margin: auto; }
	.messages text { fill: #fff; font-size: 10px; font-weight: bold; }

	/* ── Docked panels ── */
	.workspace { display: flex; flex: 1; padding-top: 1px; }

	.docks {
		display: flex;
		flex-direction: column;
		width: 30px;
		flex: none;
		border-right: 1px solid #716f64;
	}

	.dock {
		display: flex;
		flex-direction: column;
		overflow: hidden;
		padding-left: 3px;
	}

	.market { height: 446px; border-bottom: 1px solid #aca899; }
	.tree { flex: 1; padding-top: 2px; }
	.dock header { display: flex; align-items: center; gap: 5px; height: 15px; }

	.dock-title {
		width: 9px;
		height: 13px;
		overflow: hidden;
		background: linear-gradient(90deg, #6a90d8, #a8c0ee);
		color: #d8e4f8;
	}

	.dock-close { display: flex; }

	.dock-body {
		display: flex;
		flex: 1;
		margin-right: 4px;
		border-left: 1px solid #aca899;
		border-top: 1px solid #aca899;
		background: #fff;
		overflow: hidden;
	}

	.rows {
		width: 4px;
		margin-top: 20px;
		flex: none;
		background: linear-gradient(#316ac5, #316ac5) 2px 40px / 2px 20px no-repeat, repeating-linear-gradient(#f4faf0 0 19px, #c0c0c0 19px 20px);
	}

	.scroll {
		display: flex;
		flex-direction: column;
		flex: 1;
		padding: 1px 0;
		background: #f4f2f0;
	}

	.arrow {
		display: flex;
		align-items: center;
		justify-content: center;
		height: 15px;
		border: 1px solid #9ab5ee;
		border-radius: 2px;
		background: #c6d6fc;
	}

	.arrow path { fill: none; stroke: #4d6185; stroke-width: 2; }

	.thumb {
		display: flex;
		align-items: center;
		justify-content: center;
		height: 307px;
		margin-bottom: auto;
		border: 1px solid #9ab5ee;
		border-radius: 2px;
		background: linear-gradient(90deg, #ccdafd, #bacdf9);
	}

	.thumb i {
		width: 7px;
		height: 8px;
		background: repeating-linear-gradient(#eef4fe 0 1px, #8cb0f8 1px 2px);
	}

	.dock-tab {
		height: 17px;
		margin: 0 5px 4px 3px;
		padding-left: 8px;
		border: solid #000;
		border-width: 0 0 1px 1px;
		background: #fff;
		line-height: 18px;
		overflow: hidden;
	}

	.tree .dock-tab { padding-left: 7px; }

	/* ── Chart ── */
	main {
		display: flex;
		flex-direction: column;
		flex: 1;
		min-width: 0;
	}

	.chart {
		position: relative;
		flex: 1;
		margin-right: 2px;
		border-bottom: 2px solid #fff;
		background: #2f4f4f;
		color: #fff;
		font-size: 9px;
		line-height: 12px;
		overflow: hidden;
	}

	.chart > svg { position: absolute; inset: 0; }
	.chart text { fill: #fff; font-size: 9px; }
	.level { stroke: #a9a9a9; }
	.bid { stroke: #778899; }
	.frame { fill: none; stroke: #fff; }
	.tick { stroke: #fff; shape-rendering: crispEdges; }
	.chart .level-tag { fill: #2f4f4f; }
	.chart .bid-tag { fill: #000; }
	.chart .countdown { fill: #ffd700; font: 13px 'Liberation Sans', sans-serif; }
	.wolfe { stroke: #ff8c00; }
	.elliott { stroke: #0000ff; stroke-width: 3; }
	.butterfly { stroke: #fff; stroke-width: 3; }
	.abc { stroke: #ff0000; stroke-width: 3; }
	.fall { stroke: #b22222; stroke-width: 2; }

	.symbol {
		position: absolute;
		left: 7px;
		top: 5px;
		display: flex;
		align-items: center;
		gap: 4px;
	}

	.comment {
		position: absolute;
		left: 7px;
		top: 18px;
		font-size: 10px;
	}

	.banner { width: 148px; margin-bottom: 12px; }
	.banner p { display: flex; justify-content: space-between; }
	.banner .rule { font-size: 9px; }

	.note {
		position: absolute;
		left: 763px;
		top: 565px;
		width: 376px;
		height: 160px;
		background: #fff;
		color: #000;
		font: 9px/15px 'Liberation Sans', sans-serif;
		white-space: pre;
	}

	/* ── Chart tabs ── */
	.chart-tabs {
		display: flex;
		height: 19px;
		padding-left: 2px;
		border-top: 1px solid #000;
		border-bottom: 1px solid #fff;
		color: #716f64;
	}

	.chart-tabs button {
		width: 80px;
		height: 18px;
		background: linear-gradient(#716f64, #716f64) right 3px / 1px 12px no-repeat;
	}

	.chart-tabs button:nth-child(4) { background: none; }

	.chart-tabs button.active {
		width: 100px;
		border: solid #000;
		border-width: 0 2px 1px 1px;
		background: #fff;
		color: #000;
	}

	.tab-arrows { margin: 3px 8px 0 auto; }

	/* ── Terminal ── */
	.terminal {
		display: flex;
		height: 47px;
		border-bottom: 1px solid #aca899;
	}

	.terminal-side {
		display: flex;
		flex-direction: column;
		align-items: center;
		gap: 5px;
		width: 15px;
		padding-top: 4px;
	}

	.terminal-side span {
		width: 13px;
		height: 28px;
		overflow: hidden;
		background: linear-gradient(#7494dc, #a8c0ee);
		color: #d8e4f8;
		line-height: 13px;
		writing-mode: vertical-rl;
		transform: rotate(180deg);
	}

	.terminal-body {
		flex: 1;
		margin: 3px 2px 2px 0;
		border: solid #aca899;
		border-width: 1px 0 0 1px;
	}

	.table-row {
		display: flex;
		height: 21px;
		border-bottom: 1px solid #000;
	}

	table {
		flex: 1;
		width: 100%;
		height: 21px;
		border-collapse: collapse;
		table-layout: fixed;
		background: linear-gradient(#ebeadb 84%, #cbc7b8);
	}

	th {
		padding: 0 6px;
		font-weight: normal;
		text-align: right;
		white-space: nowrap;
		background: linear-gradient(#c5c2b2, #c5c2b2) right 3px / 1px 13px no-repeat;
	}

	th:first-child { text-align: left; padding-left: 8px; }
	th i { padding: 0 8px; color: #888; font-style: normal; }

	.spin { display: flex; flex-direction: column; width: 15px; margin: 1px 1px 0 2px; }

	.spin button {
		display: flex;
		align-items: center;
		justify-content: center;
		height: 10px;
		border: 1px solid #9ab5ee;
		border-radius: 2px;
		background: #c6d6fc;
	}

	.spin path { fill: #4d6185; }
	.terminal-tabs { display: flex; padding-left: 2px; color: #716f64; }

	.terminal-tabs button {
		height: 19px;
		padding: 0 10px 0 9px;
		background: linear-gradient(#716f64, #716f64) right 4px / 1px 12px no-repeat;
	}

	.terminal-tabs button.active {
		height: 18px;
		padding: 0 7px 0 8px;
		border: solid #000;
		border-width: 0 2px 1px 1px;
		background: #fff;
		color: #000;
	}

	/* ── Status bar ── */
	.status-bar {
		display: flex;
		align-items: center;
		height: 21px;
		border-top: 1px solid #fff;
	}

	.hint { flex: 1; padding: 2px 0 0 1px; }

	.cell {
		height: 17px;
		box-sizing: border-box;
		padding-left: 4px;
		border-left: 1px solid #aca899;
		line-height: 19px;
		white-space: nowrap;
	}

	.traffic { display: flex; align-items: center; gap: 24px; width: 149px; }
	.grip-corner { align-self: flex-end; }
</style>
